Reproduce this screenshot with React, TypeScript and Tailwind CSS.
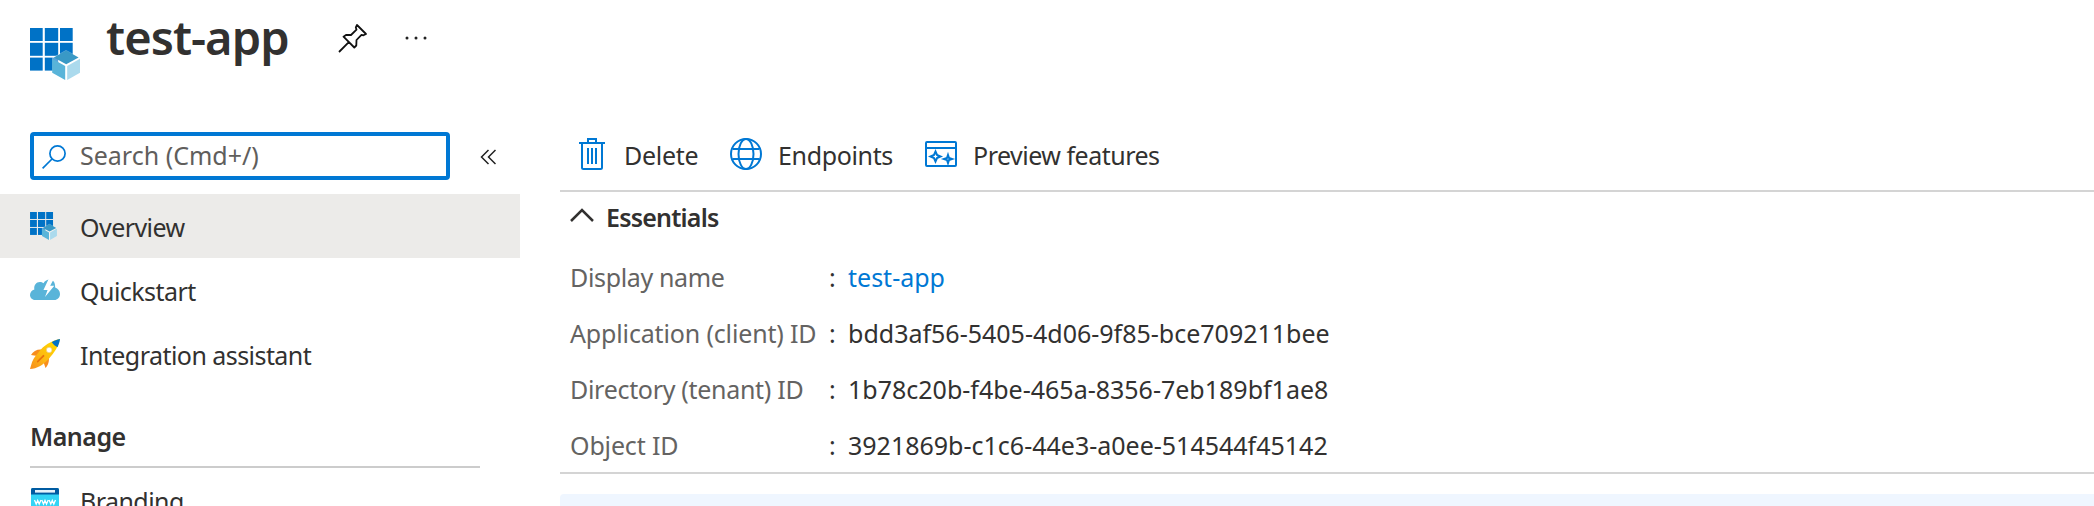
import type { ReactNode } from "react";

function AppIcon({ className }: { className: string }) {
  return (
    <svg viewBox="0 0 50 52" className={className}>
      {[0, 14.8, 30].map((x) =>
        [0, 14.8, 29.6].map((y) => (
          <rect key={`${x}-${y}`} x={x} y={y} width={x === 14.8 ? 13.4 : 12.7} height={x === 30 && y > 20 ? 0 : 13} fill="#0072c6" />
        ))
      )}
      <path d="M36 22 50.5 29.8V44.5L36.6 53 22 44.5V29.8Z" fill="#fff" fillOpacity="0.35" />
      <path d="M36.2 22.4 48.6 29.6 36.2 36.2 23.8 29.6Z" fill="#3999c6" />
      <path d="M22.2 30.8 35.2 38V52L22.2 44.8Z" fill="#59b4d9" />
      <path d="M50 30.8 37.2 38V52L50 44.8Z" fill="#abdaed" />
    </svg>
  );
}

function CloudIcon() {
  return (
    <svg viewBox="0 0 29 22" preserveAspectRatio="none" className="h-[22px] w-[30px]">
      <path d="M5 21C2 21 0 18.500 0 16 0 13.200 1.800 11 4.200 10.400 3.500 6.500 6 3 9.500 3 11 3 12 3.500 13 4.200 14.500 1.700 16.600.5 19 .5 22.500.5 24.600 3.500 24.300 8.500 27 9.500 29 12 29 15 29 18.500 26.500 21 23.500 21Z" fill="#59b4d9" />
      <path d="M18 0 13 11H17L14.500 18 23.500 6.700H19.500L23 0Z" fill="#fff" />
    </svg>
  );
}

function RocketIcon() {
  return (
    <svg viewBox="0 0 29 30" preserveAspectRatio="none" className="h-[30px] w-[30px]">
      <defs>
        <linearGradient id="hull" x1="1" y1="0" x2="0" y2="1">
          <stop offset="0.2" stopColor="#ffd400" />
          <stop offset="0.6" stopColor="#fdb813" />
          <stop offset="1" stopColor="#f78d1e" />
        </linearGradient>
      </defs>
      <path d="M11.500 10.500C7 10 3 12 1 16L7 17ZM18 18C19 22 17.500 26.500 15 29L13 23Z" fill="#f78d1e" />
      <path d="M29 0C23 1 16 4.500 10.500 10.500 7 15 4 18 2 23L0 30C7 29.500 12 26.500 18 20 24 13.500 27.500 7 29 0Z" fill="url(#hull)" />
      <path d="M29 0C26 .6 23.500 1.600 21 3.200 22.500 5.500 24.500 7 26.600 8.200 27.900 5.300 28.600 2.700 29 0Z" fill="#0072c6" />
      <circle cx="18.500" cy="11" r="2.700" fill="#fff" stroke="#e8c77a" strokeWidth="0.600" />
      <path d="M7.500 22.500 13 16.800" stroke="#e8720c" strokeWidth="1.800" strokeLinecap="round" />
    </svg>
  );
}

function BrandingIcon() {
  return (
    <svg viewBox="0 0 28 28" className="mt-1 ml-px h-7 w-7">
      <rect width="28" height="28" rx="1.500" fill="#32d4f5" />
      <path d="M0 6.500V1.500Q0 0 1.500 0H26.500Q28 0 28 1.500V6.500Z" fill="#005ba1" />
      <rect x="4" y="2" width="20" height="2.600" fill="#e6f2fa" />
      <path d="M3.500 12 5.200 16 6.700 12.500 8.200 16 9.900 12M10.800 12 12.500 16 14 12.500 15.500 16 17.200 12M18.100 12 19.800 16 21.300 12.500 22.800 16 24.500 12" fill="none" stroke="#fff" strokeWidth="1.300" />
    </svg>
  );
}

function NavItem({ icon, active, children }: { icon: ReactNode; active?: boolean; children: ReactNode }) {
  return (
    <li className={`flex h-16 w-[520px] shrink-0 items-center pl-[30px] ${active ? "bg-[#ecebe9]" : ""}`}>
      <span className="flex w-[50px] items-center">{icon}</span>
      <span className="pt-[2px] tracking-[-0.55px]">{children}</span>
    </li>
  );
}

function Detail({ label, children }: { label: ReactNode; children: ReactNode }) {
  return (
    <div className="flex h-14 items-center">
      <dt className="w-[259px] text-[#646362]">{label}</dt>
      <dd className="flex">
        <span className="w-[19px]">:</span>
        {children}
      </dd>
    </div>
  );
}

export default function App() {
  return (
    <div className="flex h-[506px] w-full flex-col overflow-hidden bg-white font-['Noto_Sans',sans-serif] text-[25px] leading-[34px] whitespace-nowrap text-[#323130]">
      <header className="flex h-[132px] shrink-0 items-start pl-[30px]">
        <AppIcon className="mt-7 h-[52px] w-[50px]" />
        <h1 className="mt-[5px] ml-[26px] w-[232px] text-[47px] leading-[64px] font-semibold tracking-[-0.95px]">test-app</h1>
        <svg viewBox="0 0 30 30" className="mt-[23px] h-[30px] w-[30px]" fill="none" stroke="#111" strokeWidth="1.800" strokeLinejoin="round">
          <path d="M19 2 28 11 25.500 12.300 23.500 11.800 18.500 17 18.300 22.500 16.300 24.500 5.500 13.700 8 12 13 12 18.500 6.700 17.800 4.300ZM10.800 19.200 1 29" />
        </svg>
        <svg viewBox="0 0 24 4" className="mt-9 ml-9 h-1 w-6" fill="#222">
          <circle cx="3" cy="2" r="1.500" />
          <circle cx="12" cy="2" r="1.500" />
          <circle cx="21" cy="2" r="1.500" />
        </svg>
      </header>

      <div className="flex min-h-0 flex-1">
        <aside className="flex w-[560px] shrink-0 flex-col">
          <div className="flex h-12 shrink-0 items-start pl-[30px]">
            <div className="flex h-12 w-[420px] items-start rounded-[4px] border-4 border-[#0078d4] pl-2">
              <svg viewBox="0 0 24 24" className="mt-[9px] h-6 w-6" fill="none" stroke="#0078d4" strokeWidth="1.700">
                <circle cx="15.500" cy="8.500" r="7.600" />
                <path d="M10 14 .6 23.400" />
              </svg>
              <span className="mt-[2px] ml-[14px] text-[#605e5c]">Search (Cmd+/)</span>
            </div>
            <svg viewBox="0 0 16 16" className="mt-[17px] ml-[30px] h-4 w-4" fill="none" stroke="#222" strokeWidth="1.500">
              <path d="M8.500 1 1.500 8 8.500 15M15.500 1 8.500 8 15.500 15" />
            </svg>
          </div>
          <ul className="mt-[14px] flex flex-col">
            <NavItem active icon={<AppIcon className="h-[28px] w-[27px]" />}>Overview</NavItem>
            <NavItem icon={<CloudIcon />}>Quickstart</NavItem>
            <NavItem icon={<RocketIcon />}>Integration assistant</NavItem>
          </ul>
          <h2 className="ml-[30px] flex h-[82px] w-[450px] shrink-0 items-end border-b-2 border-[#cccccc] pb-[13px] font-semibold tracking-[-0.5px]">Manage</h2>
          <ul>
            <NavItem icon={<BrandingIcon />}>Branding</NavItem>
          </ul>
        </aside>

        <main className="flex min-w-0 flex-1 flex-col">
          <div className="flex h-[60px] shrink-0 items-start border-b-2 border-[#d4d4d4] pt-[6px] pl-[19px]">
            <button className="flex w-[151px] items-start">
              <svg viewBox="0 0 26 32" className="h-8 w-[26px]" fill="none" stroke="#0078d4" strokeWidth="2">
                <path d="M0 5H26M9 5V1H17V5M3 5V29.500Q3 31 4.500 31H21.500Q23 31 23 29.500V5M9 10V26M13 10V26M17 10V26" />
              </svg>
              <span className="ml-[19px] tracking-[-0.3px]">Delete</span>
            </button>
            <button className="flex w-[195px] items-start">
              <svg viewBox="0 0 32 32" className="h-8 w-8" fill="none" stroke="#0078d4" strokeWidth="2">
                <circle cx="16" cy="16" r="15" />
                <ellipse cx="16" cy="16" rx="7.500" ry="15" />
                <path d="M2.500 11H29.500M2.500 21H29.500" />
              </svg>
              <span className="ml-[16px] tracking-[-0.35px]">Endpoints</span>
            </button>
            <button className="flex items-start">
              <svg viewBox="0 0 32 26" className="mt-[3px] h-[26px] w-8" fill="none" stroke="#0078d4" strokeWidth="2">
                <rect x="1" y="1" width="30" height="24" rx="1" />
                <path d="M1 7H31M10.500 10.500 12 14 15.500 15.500 12 17 10.500 20.500 9 17 5.500 15.500 9 14ZM23 14 24 17 27 18 24 19 23 22 22 19 19 18 22 17Z" />
              </svg>
              <span className="ml-[16px] tracking-[-0.5px]">Preview features</span>
            </button>
          </div>

          <section className="flex h-[282px] shrink-0 flex-col border-b-2 border-[#d4d4d4]">
            <h2 className="flex h-[58px] shrink-0 items-start pl-[10px] font-semibold tracking-[-0.8px]">
              <svg viewBox="0 0 24 14" className="mt-4 mr-[12px] h-[14px] w-6" fill="none" stroke="#323130" strokeWidth="2.500">
                <path d="M1 13 12 2 23 13" />
              </svg>
              <span className="mt-2">Essentials</span>
            </h2>
            <dl className="-mt-[1px] pl-[10px]">
              <Detail label={<span className="tracking-[-0.35px]">Display name</span>}>
                <a className="text-[#0078d4]">test-app</a>
              </Detail>
              <Detail label={<span className="tracking-[-0.15px]">Application (client) ID</span>}>bdd3af56-5405-4d06-9f85-bce709211bee</Detail>
              <Detail label={<span className="tracking-[-0.3px]">Directory (tenant) ID</span>}>1b78c20b-f4be-465a-8356-7eb189bf1ae8</Detail>
              <Detail label={<span className="tracking-[-0.15px]">Object ID</span>}>3921869b-c1c6-44e3-a0ee-514544f45142</Detail>
            </dl>
          </section>

          <div className="mt-5 h-16 shrink-0 rounded-tl-[4px] bg-[#eff6ff]" />
        </main>
      </div>
    </div>
  );
}
